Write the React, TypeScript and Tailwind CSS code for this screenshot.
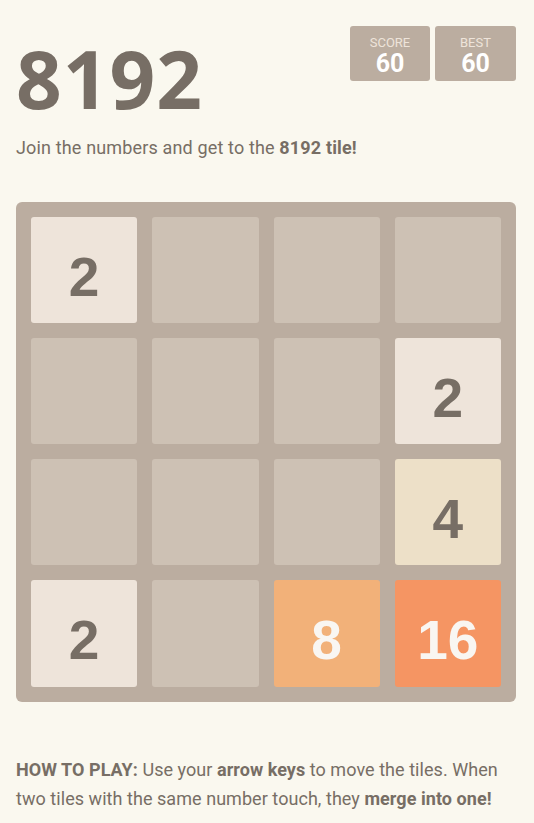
import React from "react";

const tiles: (number | null)[] = [
  2, null, null, null,
  null, null, null, 2,
  null, null, null, 4,
  2, null, 8, 16,
];

function tileClass(v: number | null): string {
  switch (v) {
    case 2:
      return "bg-[#eee4da] text-[#776e65]";
    case 4:
      return "bg-[#ede0c8] text-[#776e65]";
    case 8:
      return "bg-[#f2b179] text-[#f9f6f2]";
    case 16:
      return "bg-[#f59563] text-[#f9f6f2]";
    default:
      return "bg-[#cdc1b4]";
  }
}

export default function App() {
  return (
    <div
      className="min-h-screen w-full bg-[#faf8ef] text-[#776e65]"
      style={{ fontFamily: "Roboto, 'Open Sans', sans-serif" }}
    >
      <div className="px-[16px] pt-[26px] w-[532px]">
        <div className="flex items-start justify-between">
          <h1
            className="mt-[12px] text-[80px] leading-[80px] font-bold text-[#776e65] tracking-[1px]"
            style={{ fontFamily: "'Open Sans', sans-serif" }}
          >
            8192
          </h1>
          <div className="flex gap-[5px]">
            <div className="w-[80px] h-[55px] rounded-[3px] bg-[#bbada0] flex flex-col items-center pt-[9px]">
              <div className="text-[13px] leading-[15px] uppercase text-[#eee4da]">Score</div>
              <div className="text-[25px] leading-[27px] font-bold text-white">60</div>
            </div>
            <div className="w-[81px] h-[55px] rounded-[3px] bg-[#bbada0] flex flex-col items-center pt-[9px]">
              <div className="text-[13px] leading-[15px] uppercase text-[#eee4da]">Best</div>
              <div className="text-[25px] leading-[27px] font-bold text-white">60</div>
            </div>
          </div>
        </div>
        <p className="mt-[15px] text-[18px] leading-[29.7px] tracking-[0.15px]">
          Join the numbers and get to the <strong className="font-bold">8192 tile!</strong>
        </p>
        <div className="mt-[39px] w-[500px] h-[500px] rounded-[6px] bg-[#bbada0] p-[15px] grid grid-cols-4 gap-[15px]">
          {tiles.map((v, i) => (
            <div
              key={i}
              className={`h-[106.25px] rounded-[3px] flex items-center justify-center pt-[14px] text-[55px] font-bold ${tileClass(v)}`}
              style={{ fontFamily: "'Liberation Sans', Arial, sans-serif" }}
            >
              {v ?? ""}
            </div>
          ))}
        </div>
        <p className="mt-[53px] text-[18px] leading-[29.7px] tracking-[0.05px]">
          <strong className="font-bold">HOW TO PLAY:</strong> Use your{" "}
          <strong className="font-bold">arrow keys</strong> to move the tiles. When two tiles
          with the same number touch, they <strong className="font-bold">merge into one!</strong>
        </p>
      </div>
    </div>
  );
}
